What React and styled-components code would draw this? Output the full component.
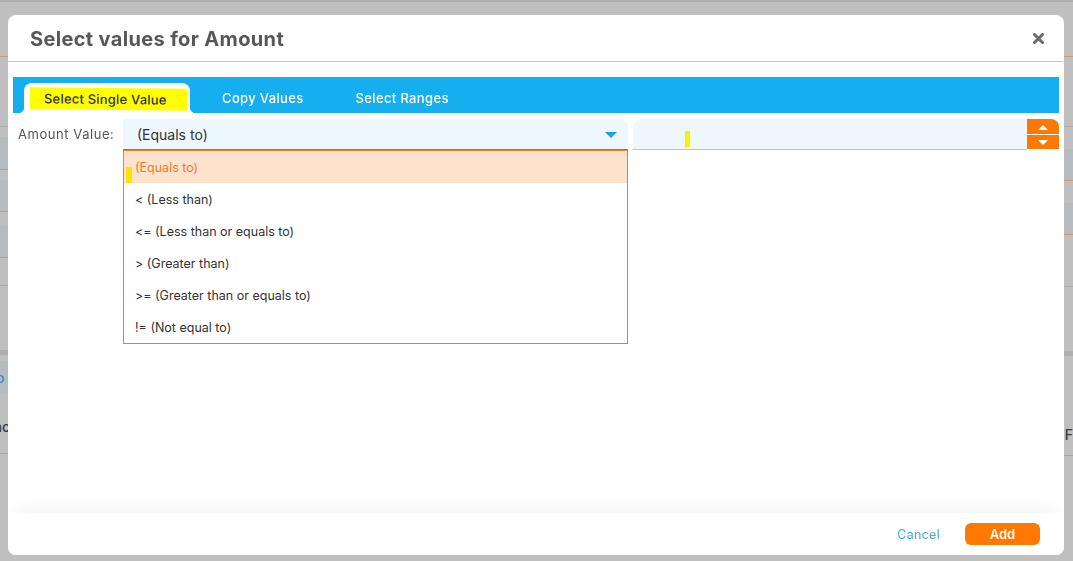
import React, { useState } from "react";
import styled, { createGlobalStyle } from "styled-components";

const GlobalStyle = createGlobalStyle`
  * { box-sizing: border-box; }
  html, body { margin: 0; padding: 0; }
  body {
    background: #bfbfbf;
    font-family: Inter, "Noto Sans", Arial, sans-serif;
    overflow: hidden;
  }
`;

const OPTIONS = [
  "(Equals to)",
  "< (Less than)",
  "<= (Less than or equals to)",
  "> (Greater than)",
  ">= (Greater than or equals to)",
  "!= (Not equal to)",
];

// rows of the dimmed page behind the modal: [height, tone, line, text]
const LEFT_ROWS = [
  [2, "dark"],
  [55, "plain", "orange"],
  [70, "plain", "gray"],
  [10, "plain"],
  [33, "blue", "orange"],
  [10, "plain"],
  [32, "blue", "orange"],
  [14, "plain"],
  [32, "blue", "orange"],
  [28, "plain", "gray"],
  [64, "plain"],
  [5, "dark"],
  [6, "plain"],
  [33, "blue", null, "o"],
  [20, "plain"],
  [24, "plain", null, "ac"],
  [16, "plain", "orange"],
];

const RIGHT_ROWS = [
  [2, "dark"],
  [55, "plain", "orange"],
  [70, "plain", "gray"],
  [22, "plain"],
  [32, "blue", "orange"],
  [22, "plain"],
  [32, "blue", "orange"],
  [52, "plain", "gray"],
  [64, "plain"],
  [5, "dark"],
  [66, "plain"],
  [24, "plain", null, "F"],
  [10, "plain", "orange"],
];

const tones = { plain: "#bfbfbf", blue: "#b5bbbf", dark: "#aeaeae" };
const lines = { orange: "#c99a74", gray: "#a9a9a9" };

function App() {
  const [selected, setSelected] = useState(0);

  return (
    <>
      <GlobalStyle />
      <Behind>
        <Side>
          {LEFT_ROWS.map(([h, tone, line, text], i) => (
            <BgRow key={i} $h={h} $tone={tone} $line={line} $align="left">
              {text && <BgText $blue={tone === "blue"}>{text}</BgText>}
            </BgRow>
          ))}
        </Side>
        <Side>
          {RIGHT_ROWS.map(([h, tone, line, text], i) => (
            <BgRow key={i} $h={h} $tone={tone} $line={line} $align="right">
              {text && <BgText>{text}</BgText>}
            </BgRow>
          ))}
        </Side>
      </Behind>

      <Modal>
        <Header>
          <Title>Select values for Amount</Title>
          <Close aria-label="close">
            <svg width="11" height="11" viewBox="0 0 11 11">
              <path
                d="M1.5 1.5 L9.5 9.5 M9.5 1.5 L1.5 9.5"
                stroke="#6b6b6b"
                strokeWidth="3"
                strokeLinecap="round"
              />
            </svg>
          </Close>
        </Header>

        <Body>
          <TabBar>
            <ActiveTab>
              <Highlight>Select Single Value</Highlight>
            </ActiveTab>
            <Tab>Copy Values</Tab>
            <Tab>Select Ranges</Tab>
          </TabBar>

          <FieldRow>
            <Label>Amount Value:</Label>
            <SelectWrap>
              <SelectBox>
                <span>{OPTIONS[selected]}</span>
                <Caret />
              </SelectBox>
              <Dropdown>
                {OPTIONS.map((opt, i) => (
                  <Option
                    key={opt}
                    $active={i === selected}
                    onClick={() => setSelected(i)}
                  >
                    {i === 0 && <Mark />}
                    {opt}
                  </Option>
                ))}
              </Dropdown>
            </SelectWrap>
            <NumberInput>
              <Cursor />
            </NumberInput>
            <Spinner>
              <SpinHalf>
                <Arrow $up />
              </SpinHalf>
              <SpinHalf>
                <Arrow />
              </SpinHalf>
            </Spinner>
          </FieldRow>
        </Body>

        <Footer>
          <CancelButton>Cancel</CancelButton>
          <AddButton>Add</AddButton>
        </Footer>
      </Modal>
    </>
  );
}

export default App;

const Behind = styled.div`
  height: 100vh;
  display: grid;
  grid-template-columns: 1fr 1fr;
`;

const Side = styled.div`
  display: flex;
  flex-direction: column;
`;

const BgRow = styled.div`
  flex: 0 0 ${(p) => p.$h}px;
  background: ${(p) => tones[p.$tone]};
  border-bottom: ${(p) => (p.$line ? `1px solid ${lines[p.$line]}` : "none")};
  display: flex;
  align-items: center;
  justify-content: ${(p) => (p.$align === "left" ? "flex-start" : "flex-end")};
  overflow: hidden;
  white-space: nowrap;
`;

const BgText = styled.span`
  font-size: 14px;
  font-weight: 500;
  color: ${(p) => (p.$blue ? "#2f8fd0" : "#3a3a3a")};
  margin-left: ${(p) => (p.$blue ? "-4px" : "-6px")};
`;

const Modal = styled.div`
  position: fixed;
  top: 15px;
  left: 8px;
  width: 1056px;
  height: 540px;
  background: #fff;
  border-radius: 8px;
  display: flex;
  flex-direction: column;
  overflow: hidden;
`;

const Header = styled.div`
  height: 47px;
  flex: 0 0 47px;
  display: flex;
  align-items: center;
  justify-content: space-between;
  padding: 1px 19px 0 22px;
  border-bottom: 1px solid #f2b98c;
  margin-right: 1px;
`;

const Title = styled.h2`
  margin: 0;
  font-size: 20px;
  font-weight: 700;
  color: #575757;
  letter-spacing: 0.35px;
`;

const Close = styled.button`
  border: 0;
  background: none;
  padding: 0;
  display: flex;
  cursor: pointer;
`;

const Body = styled.div`
  flex: 1;
  padding: 15px 5px 0;
`;

const TabBar = styled.div`
  height: 36px;
  background: #15aeef;
  display: flex;
  align-items: flex-end;
  padding-left: 11px;
  gap: 12px;
`;

const Tab = styled.div`
  height: 30px;
  padding: 0 20px;
  display: flex;
  align-items: center;
  color: #fff;
  font-size: 13px;
  font-weight: 500;
  letter-spacing: 0.35px;
`;

const ActiveTab = styled(Tab)`
  position: relative;
  width: 166px;
  padding: 0 3px 0 6px;
  background: #fff;
  border-radius: 8px 8px 0 0;
  color: #333;
  letter-spacing: 0.2px;

  &::before,
  &::after {
    content: "";
    position: absolute;
    bottom: 0;
    width: 6px;
    height: 6px;
  }
  &::before {
    left: -6px;
    background: radial-gradient(circle at 0 0, transparent 6px, #fff 6.5px);
  }
  &::after {
    right: -6px;
    background: radial-gradient(circle at 100% 0, transparent 6px, #fff 6.5px);
  }
`;

const Highlight = styled.span`
  flex: 1;
  height: 22px;
  line-height: 22px;
  padding-left: 14px;
  background: #ffff00;
  transform: skewY(0.6deg);
  margin-top: 1px;
`;

const FieldRow = styled.div`
  display: flex;
  align-items: flex-start;
  margin-top: 6px;
`;

const Label = styled.div`
  width: 110px;
  height: 30px;
  line-height: 31px;
  padding-left: 5px;
  font-size: 13px;
  color: #555;
  letter-spacing: 0.55px;
`;

const SelectWrap = styled.div`
  position: relative;
  width: 505px;
`;

const SelectBox = styled.div`
  height: 31px;
  background: #eef7fd;
  border-bottom: 1px solid #1b9be0;
  border-radius: 0 8px 0 0;
  display: flex;
  align-items: center;
  justify-content: space-between;
  padding: 0 11px 0 14px;
  font-size: 14px;
  color: #333;
`;

const Caret = styled.span`
  width: 0;
  height: 0;
  border-left: 6px solid transparent;
  border-right: 6px solid transparent;
  border-top: 6px solid #1e9ee6;
  margin-top: 1px;
`;

const Dropdown = styled.div`
  position: absolute;
  top: 31px;
  left: 0;
  width: 505px;
  background: #fff;
  border: 1px solid #f07f1e;
  z-index: 2;
`;

const Option = styled.div`
  position: relative;
  height: 32px;
  line-height: 34px;
  padding-left: 11px;
  font-size: 12.5px;
  color: ${(p) => (p.$active ? "#f37a2a" : "#333")};
  background: ${(p) => (p.$active ? "#fde3cd" : "#fff")};
  cursor: pointer;
`;

const Mark = styled.span`
  position: absolute;
  left: 2px;
  top: 16px;
  width: 6px;
  height: 16px;
  background: #ffe400;
`;

const NumberInput = styled.div`
  position: relative;
  flex: 1;
  height: 31px;
  margin-left: 5px;
  background: #eff7fd;
  border-bottom: 1px solid #f0b88a;
  border-radius: 8px 0 0 0;
`;

const Cursor = styled.span`
  position: absolute;
  left: 52px;
  top: 12px;
  width: 5px;
  height: 16px;
  background: #f3f300;
`;

const Spinner = styled.div`
  width: 32px;
  height: 30px;
  background: #ff7900;
  border-radius: 0 8px 0 0;
  display: flex;
  flex-direction: column;
  overflow: hidden;
`;

const SpinHalf = styled.div`
  flex: 1;
  display: flex;
  align-items: center;
  justify-content: center;
  &:first-child {
    border-bottom: 1px solid #fff;
    padding-top: 1px;
  }
`;

const Arrow = styled.span`
  width: 0;
  height: 0;
  border-left: 5px solid transparent;
  border-right: 5px solid transparent;
  ${(p) =>
    p.$up ? "border-bottom: 5px solid #fff;" : "border-top: 5px solid #fff;"}
`;

const Footer = styled.div`
  flex: 0 0 42px;
  display: flex;
  align-items: center;
  justify-content: flex-end;
  padding-right: 24px;
  background: #fff;
  box-shadow: 0 -12px 18px -8px rgba(0, 0, 0, 0.05);
  position: relative;
`;

const CancelButton = styled.button`
  border: 0;
  background: none;
  color: #4aa6ee;
  font-family: inherit;
  font-size: 12.5px;
  letter-spacing: 0.3px;
  margin-right: 25px;
  padding: 0;
  cursor: pointer;
`;

const AddButton = styled.button`
  width: 75px;
  height: 22px;
  border: 0;
  border-radius: 6px;
  background: #ff7900;
  color: #fff;
  font-family: inherit;
  font-size: 13px;
  font-weight: 600;
  cursor: pointer;
`;
